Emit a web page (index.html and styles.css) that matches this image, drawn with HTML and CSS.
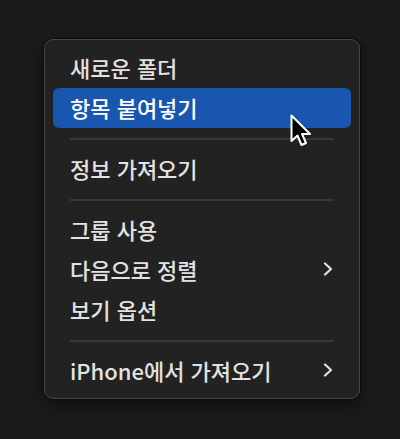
FILE: index.html
```html
<!DOCTYPE html>
<html lang="ko">
<head>
<meta charset="utf-8">
<link rel="stylesheet" href="styles.css">
</head>
<body>
<div class="stage">
  <div class="menu">
    <div class="item">새로운 폴더</div>
    <div class="item active">항목 붙여넣기</div>
    <div class="sep"></div>
    <div class="item">정보 가져오기</div>
    <div class="sep"></div>
    <div class="item">그룹 사용</div>
    <div class="item">다음으로 정렬<svg class="chev" viewBox="0 0 10 14" width="10" height="14"><path d="M2 1.5 L8 7 L2 12.5" fill="none" stroke="currentColor" stroke-width="2.2" stroke-linecap="round" stroke-linejoin="round"/></svg></div>
    <div class="item">보기 옵션</div>
    <div class="sep"></div>
    <div class="item">iPhone에서 가져오기<svg class="chev" viewBox="0 0 10 14" width="10" height="14"><path d="M2 1.5 L8 7 L2 12.5" fill="none" stroke="currentColor" stroke-width="2.2" stroke-linecap="round" stroke-linejoin="round"/></svg></div>
  </div>
  <svg class="cursor" viewBox="0 0 24 36" width="24" height="36">
    <path d="M1.5 1.5 L1.5 27 L7.5 21.5 L11.5 31 L16 29 L12 20 L20 20 Z" fill="#000" stroke="#fff" stroke-width="2" stroke-linejoin="round"/>
  </svg>
</div>
</body>
</html>
```
FILE: styles.css
```css
html, body {
  margin: 0;
  padding: 0;
  background: #1b1b1b;
}
.stage {
  position: relative;
  width: 400px;
  height: 439px;
  padding: 39px 0 0 44px;
  box-sizing: border-box;
}
.menu {
  width: 316px;
  box-sizing: border-box;
  background: #222222;
  border: 1px solid #464646;
  border-radius: 9px;
  padding: 8px 8px 7px 8px;
  box-shadow: 0 0 0 1px #0c0c0c, 0 6px 18px rgba(0,0,0,0.5);
  display: flex;
  flex-direction: column;
  font-family: "Noto Sans CJK KR", "Noto Sans", sans-serif;
  font-size: 22px;
  font-weight: 500;
  color: #e2e2e2;
}
.item {
  height: 40px;
  box-sizing: border-box;
  display: flex;
  align-items: center;
  justify-content: space-between;
  padding: 0 18px 2px 17px;
  border-radius: 6px;
  line-height: 1;
}
.item.active {
  background: #1856b0;
  color: #ffffff;
}
.chev {
  color: #e2e2e2;
}
.sep {
  height: 21px;
  display: flex;
  align-items: center;
  padding: 0 17px;
}
.sep::before {
  content: "";
  flex: 1;
  height: 2px;
  background: #383838;
}
.cursor {
  position: absolute;
  left: 290px;
  top: 114px;
}
```
